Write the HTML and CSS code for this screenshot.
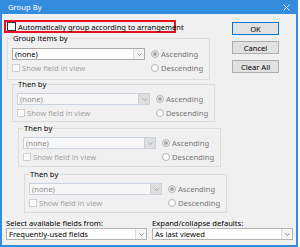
FILE: index.html
```html
<!DOCTYPE html>
<html>
<head>
<meta charset="utf-8">
<link rel="stylesheet" href="styles.css">
</head>
<body>
<div class="window">
  <div class="titlebar">
    <span class="title">Group By</span>
    <svg class="close" width="7" height="7" viewBox="0 0 7 7"><path d="M0.5 0.5 L6.5 6.5 M6.5 0.5 L0.5 6.5" stroke="#fff" stroke-width="0.9" fill="none"/></svg>
  </div>
  <div class="main">
    <div class="left">
      <div class="auto"><span class="cb main-cb"></span><span>Automatically group according to arrangement</span></div>

      <fieldset class="frame f1">
        <legend>Group items by</legend>
        <div class="grid">
          <div class="combo"><span class="val">(none)</span><span class="arrow"><svg width="5" height="3" viewBox="0 0 5 3"><path d="M0.4 0.4 L2.5 2.5 L4.6 0.4" fill="none" stroke="#7a7a7a" stroke-width="0.8"/></svg></span></div>
          <div class="radio"><span class="dot on"></span>Ascending</div>
          <div class="check"><span class="cb"></span>Show field in view</div>
          <div class="radio"><span class="dot"></span>Descending</div>
        </div>
      </fieldset>

      <fieldset class="frame f2">
        <legend>Then by</legend>
        <div class="grid">
          <div class="combo dis"><span class="val">(none)</span><span class="arrow"><svg width="5" height="3" viewBox="0 0 5 3"><path d="M0.4 0.4 L2.5 2.5 L4.6 0.4" fill="none" stroke="#9a9a9a" stroke-width="0.8"/></svg></span></div>
          <div class="radio"><span class="dot on"></span>Ascending</div>
          <div class="check"><span class="cb"></span>Show field in view</div>
          <div class="radio"><span class="dot"></span>Descending</div>
        </div>
      </fieldset>

      <fieldset class="frame f3">
        <legend>Then by</legend>
        <div class="grid">
          <div class="combo dis"><span class="val">(none)</span><span class="arrow"><svg width="5" height="3" viewBox="0 0 5 3"><path d="M0.4 0.4 L2.5 2.5 L4.6 0.4" fill="none" stroke="#9a9a9a" stroke-width="0.8"/></svg></span></div>
          <div class="radio"><span class="dot on"></span>Ascending</div>
          <div class="check"><span class="cb"></span>Show field in view</div>
          <div class="radio"><span class="dot"></span>Descending</div>
        </div>
      </fieldset>

      <fieldset class="frame f4">
        <legend>Then by</legend>
        <div class="grid">
          <div class="combo dis"><span class="val">(none)</span><span class="arrow"><svg width="5" height="3" viewBox="0 0 5 3"><path d="M0.4 0.4 L2.5 2.5 L4.6 0.4" fill="none" stroke="#9a9a9a" stroke-width="0.8"/></svg></span></div>
          <div class="radio"><span class="dot on"></span>Ascending</div>
          <div class="check"><span class="cb"></span>Show field in view</div>
          <div class="radio"><span class="dot"></span>Descending</div>
        </div>
      </fieldset>
    </div>
    <div class="buttons">
      <div class="btn default">OK</div>
      <div class="btn">Cancel</div>
      <div class="btn">Clear All</div>
    </div>
  </div>
  <div class="bottom">
    <div class="field">
      <div class="lbl">Select available fields from:</div>
      <div class="combo big"><span class="val">Frequently-used fields</span><span class="arrow"><svg width="5" height="3" viewBox="0 0 5 3"><path d="M0.4 0.4 L2.5 2.5 L4.6 0.4" fill="none" stroke="#7a7a7a" stroke-width="0.8"/></svg></span></div>
    </div>
    <div class="field">
      <div class="lbl">Expand/collapse defaults:</div>
      <div class="combo big"><span class="val">As last viewed</span><span class="arrow"><svg width="5" height="3" viewBox="0 0 5 3"><path d="M0.4 0.4 L2.5 2.5 L4.6 0.4" fill="none" stroke="#7a7a7a" stroke-width="0.8"/></svg></span></div>
    </div>
  </div>
</div>
</body>
</html>
```

FILE: styles.css
```css
* { box-sizing: border-box; }

body {
  margin: 0;
  background: #ffffff;
  font-family: "Noto Sans", "Open Sans", sans-serif;
  font-size: 7.6px;
  color: #1a1a1a;
}

.window {
  width: 298px;
  height: 247px;
  background: #f0f0f0;
  border: 2px solid #348cdc;
  border-top: 0;
  display: flex;
  flex-direction: column;
}

.titlebar {
  height: 14px;
  background: #348cdc;
  color: #ffffff;
  display: flex;
  align-items: center;
  justify-content: space-between;
  padding: 0 6px 0 6px;
  font-size: 7.7px;
}

.title { line-height: 10px; }

.main {
  display: flex;
  padding: 6px 0 0 2px;
}

.left {
  width: 228px;
}

.auto {
  display: flex;
  align-items: center;
  gap: 2px;
  width: 172px;
  height: 13px;
  border: 2px solid #e81123;
  padding-left: 1px;
  white-space: nowrap;
  color: #000;
  font-size: 7.5px;
}

.cb {
  display: inline-block;
  width: 8px;
  height: 8px;
  border: 1px solid #cfcfcf;
  background: #fbfbfb;
  flex: none;
}

.cb.main-cb {
  width: 9px;
  height: 9px;
  border-color: #333333;
  background: #ffffff;
}

.frame {
  width: 203px;
  min-width: 0;
  margin: 0;
  padding: 4px 4px 4px;
  border: 1px solid #dcdcdc;
}

.frame legend {
  padding: 0 1px;
  height: 9px;
  line-height: 9px;
  color: #000;
}

.f1 { margin-left: 3px; margin-top: 1px; padding-top: 5px; padding-bottom: 7px; }
.f2 { margin-left: 8px; margin-top: 0; }
.f3 { margin-left: 14px; margin-top: 2px; padding-bottom: 5px; }
.f4 { margin-left: 20px; margin-top: 3px; padding-bottom: 5px; }

.grid {
  display: grid;
  grid-template-columns: 133px auto;
  grid-template-rows: 12px 8px;
  column-gap: 6px;
  row-gap: 4px;
  align-items: center;
}

.combo {
  display: flex;
  height: 12px;
  border: 1px solid #a9a9a9;
  background: #ffffff;
  color: #000;
}

.combo .val {
  flex: 1;
  padding-left: 2px;
  line-height: 10px;
  white-space: nowrap;
}

.combo .arrow {
  width: 11px;
  display: flex;
  align-items: center;
  justify-content: center;
  border-left: 1px solid #dadada;
  background: #f4f4f4;
}

.combo.dis {
  background: #f7f7f7;
  border-color: #c9d3de;
  color: #8a8a8a;
}

.combo.dis .arrow {
  background: #dedede;
  border-left-color: #cfcfcf;
}

.radio {
  display: flex;
  align-items: center;
  gap: 2px;
  color: #777777;
  white-space: nowrap;
}

.dot {
  width: 8px;
  height: 8px;
  border-radius: 50%;
  border: 1px solid #b5b5b5;
  background: #ffffff;
  display: flex;
  align-items: center;
  justify-content: center;
  flex: none;
}

.dot.on {
  background: #f0f0f0;
}

.dot.on::after {
  content: "";
  width: 4px;
  height: 4px;
  border-radius: 50%;
  background: #a8a8a8;
}

.check {
  display: flex;
  align-items: center;
  gap: 2px;
  color: #a3a3a3;
  white-space: nowrap;
}

.buttons {
  display: flex;
  flex-direction: column;
  gap: 6px;
  margin-top: 2px;
}

.btn {
  width: 47px;
  height: 13px;
  border: 1px solid #adadad;
  background: #e1e1e1;
  color: #000;
  display: flex;
  align-items: center;
  justify-content: center;
}

.btn.default {
  border-color: #0078d7;
}

.bottom {
  display: grid;
  grid-template-columns: 141px 141px;
  column-gap: 5px;
  padding-left: 4px;
  margin-top: 5px;
}

.lbl {
  height: 10px;
  line-height: 10px;
  color: #000;
  white-space: nowrap;
}

.combo.big {
  height: 12px;
  border-color: #b4b4b4;
}
```
